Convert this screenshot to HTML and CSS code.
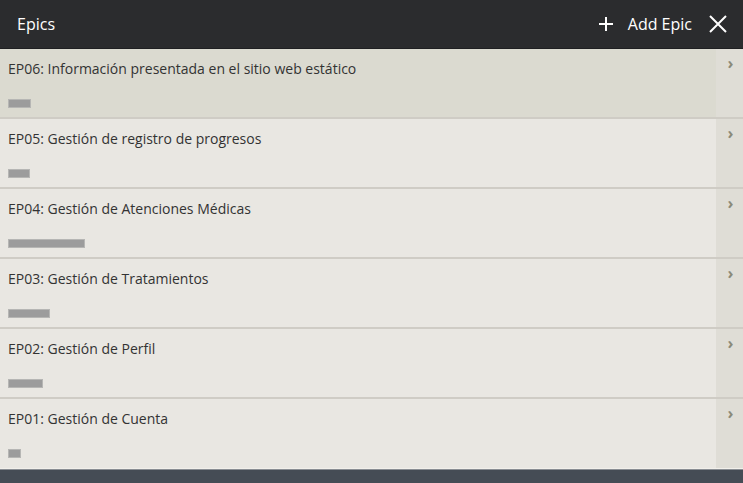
FILE: index.html
```html
<!DOCTYPE html>
<html>
<head>
<meta charset="utf-8">
<link rel="stylesheet" href="styles.css">
</head>
<body>
<div class="app">
  <header class="topbar">
    <div class="title">Epics</div>
    <div class="actions">
      <span class="add">
        <svg class="plus" width="14" height="14" viewBox="0 0 14 14"><path d="M7 0v14M0 7h14" stroke="#fff" stroke-width="2"/></svg>
        <span class="add-label">Add Epic</span>
      </span>
      <svg class="close" width="18" height="18" viewBox="0 0 18 18"><path d="M1 1L17 17M17 1L1 17" stroke="#fff" stroke-width="2"/></svg>
    </div>
  </header>
  <ul class="list">
    <li class="row active">
      <div class="main"><div class="name">EP06: Información presentada en el sitio web estático</div><div class="bar" style="width:23px"></div></div>
      <div class="side"><span class="chev">›</span></div>
    </li>
    <li class="row">
      <div class="main"><div class="name">EP05: Gestión de registro de progresos</div><div class="bar" style="width:22px"></div></div>
      <div class="side"><span class="chev">›</span></div>
    </li>
    <li class="row">
      <div class="main"><div class="name">EP04: Gestión de Atenciones Médicas</div><div class="bar" style="width:77px"></div></div>
      <div class="side"><span class="chev">›</span></div>
    </li>
    <li class="row">
      <div class="main"><div class="name">EP03: Gestión de Tratamientos</div><div class="bar" style="width:42px"></div></div>
      <div class="side"><span class="chev">›</span></div>
    </li>
    <li class="row">
      <div class="main"><div class="name">EP02: Gestión de Perfil</div><div class="bar" style="width:35px"></div></div>
      <div class="side"><span class="chev">›</span></div>
    </li>
    <li class="row last">
      <div class="main"><div class="name">EP01: Gestión de Cuenta</div><div class="bar" style="width:13px"></div></div>
      <div class="side"><span class="chev">›</span></div>
    </li>
  </ul>
  <div class="footer"></div>
</div>
</body>
</html>
```
FILE: styles.css
```css
* { box-sizing: border-box; }
html, body { margin: 0; padding: 0; }
body {
  font-family: "Open Sans", "Liberation Sans", sans-serif;
  background: #454c55;
  width: 743px;
  height: 483px;
  overflow: hidden;
}
.app { display: flex; flex-direction: column; height: 483px; }
.topbar {
  height: 49px;
  background: #2b2c2e;
  border-bottom: 1px solid #1f2022;
  display: flex;
  align-items: center;
  justify-content: space-between;
  padding: 0 16px 0 17px;
  color: #fff;
}
.title { font-size: 16px; }
.actions { display: flex; align-items: center; }
.add { display: flex; align-items: center; }
.plus { margin-right: 15px; }
.add-label { font-size: 16px; margin-right: 17px; }
.close { display: block; }
.list { list-style: none; margin: 0; padding: 0; }
.row {
  height: 70px;
  display: flex;
  background: #e9e7e2;
  border-bottom: 2px solid #cfccc5;
}
.row.last { border-bottom: 1px solid #f2f0eb; }
.row.active { background: #dbdad0; }
.main { flex: 1; padding: 10px 0 0 8px; }
.name { font-size: 14px; color: #333; line-height: 20px; }
.bar {
  margin-top: 20px;
  height: 9px;
  background: #9c9c9c;
  border: 1px solid #b6b6b4;
}
.side {
  width: 27px;
  background: #dfddd6;
  display: flex;
  justify-content: center;
  padding-top: 4px;
  padding-left: 2px;
}
.chev { color: #8a8a78; font-size: 16px; font-weight: bold; line-height: 20px; }
.footer { flex: 1; background: #454c55; border-top: 1px solid #8a8e93; }
```
